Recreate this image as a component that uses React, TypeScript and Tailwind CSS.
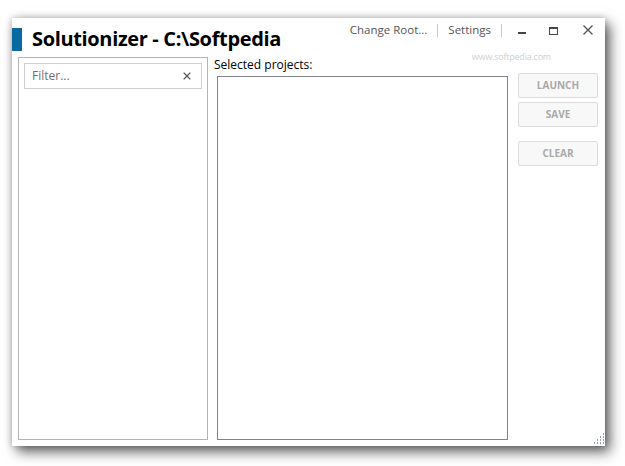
import { X } from "lucide-react";

const font = { fontFamily: '"Open Sans", "Noto Sans", sans-serif' };

function GripDots() {
  // little resize grip at the bottom right corner
  const dots = [
    [8, 0],
    [8, 3], [5, 3],
    [8, 6], [5, 6], [2, 6],
    [8, 9], [5, 9], [2, 9], [-1, 9],
  ];
  return (
    <svg width="10" height="11" viewBox="-1 0 10 11" className="absolute right-[1px] bottom-[2px]">
      {dots.map(([x, y], i) => (
        <rect key={i} x={x} y={y} width="1" height="2" fill="#9aa4b4" />
      ))}
    </svg>
  );
}

export default function App() {
  return (
    <main className="w-[625px] h-[466px] bg-white overflow-hidden pl-[12px] pt-[18px]" style={font}>
      <div className="relative w-[593px] h-[428px] bg-white flex flex-col shadow-[5px_6px_12px_rgba(0,0,0,0.6),0_0_7px_rgba(0,0,0,0.25)]">
        {/* header */}
        <div className="flex h-[39px] justify-between">
          <div className="flex items-start pt-[10px]">
            <div className="w-[10px] h-[23px] bg-[#0a6aa0]" />
            <h1 className="ml-[10px] -mt-[3px] text-[20px] font-bold leading-[28px] text-black tracking-[-0.35px]">
              Solutionizer - C:\Softpedia
            </h1>
          </div>
          <div className="relative flex items-start pt-[3px] pr-[12px] text-[11.5px] text-[#555]">
            <span className="leading-[18px]">Change Root...</span>
            <span className="mx-[10px] mt-[3px] w-px h-[13px] bg-[#c8c8c8]" />
            <span className="leading-[18px]">Settings</span>
            <span className="mx-[10px] mt-[3px] w-px h-[13px] bg-[#c8c8c8]" />
            <span className="mt-[11px] ml-[6px] w-[8px] h-[2px] bg-[#444]" />
            <span className="mt-[6px] ml-[23px] w-[9px] h-[8px] border border-[#444] border-t-2" />
            <svg className="mt-[4px] ml-[25px]" width="10" height="10" viewBox="0 0 10 10">
              <path d="M0.5 0.5 L9.5 9.5 M9.5 0.5 L0.5 9.5" stroke="#555" strokeWidth="1.4" />
            </svg>
            <span className="absolute left-[122px] top-[32px] text-[9px] text-[#d0d0d0] tracking-tight">
              www.softpedia.com
            </span>
          </div>
        </div>

        {/* body */}
        <div className="flex flex-1 pl-[6px] pb-[6px] pr-[7px]">
          <div className="w-[190px] border border-[#b4b4b4] p-[5px]">
            <div className="flex items-center h-[26px] border border-[#cfcfcf] pl-[7px] pr-[8px] text-[12px] text-[#6f6f6f]">
              <span className="flex-1">Filter...</span>
              <X className="w-[12px] h-[12px] text-[#555]" strokeWidth={2.2} />
            </div>
          </div>

          <div className="ml-[6px] flex flex-col">
            <div className="h-[19px] text-[12px] leading-[16px] text-black">Selected projects:</div>
            <div className="ml-[3px] flex-1 w-[291px] border border-[#82828a]" />
          </div>

          <div className="ml-auto pt-[16px] flex flex-col w-[80px] text-[10px] font-bold text-[#a9a9a9]">
            <button className="h-[25px] rounded-[2px] border border-[#dcdcdc] bg-[#f8f8f8]">LAUNCH</button>
            <button className="mt-[4px] h-[25px] rounded-[2px] border border-[#dcdcdc] bg-[#f8f8f8]">SAVE</button>
            <button className="mt-[14px] h-[25px] rounded-[2px] border border-[#dcdcdc] bg-[#f8f8f8]">CLEAR</button>
          </div>
        </div>
        <GripDots />
      </div>
    </main>
  );
}
